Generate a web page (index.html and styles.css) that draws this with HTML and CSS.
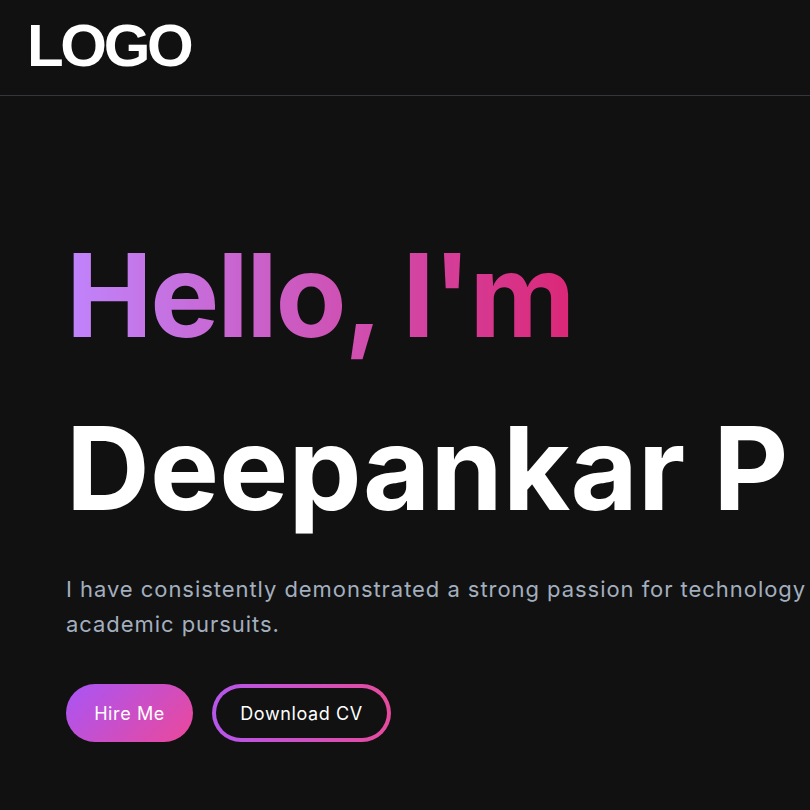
FILE: index.html
```html
<!DOCTYPE html>
<html lang="en">
<head>
<meta charset="utf-8">
<title>Deepankar P</title>
<link rel="stylesheet" href="styles.css">
</head>
<body>
<header class="site-header">
  <div class="logo">LOGO</div>
</header>
<main class="hero">
  <h1 class="hero-title">
    <span class="greeting">Hello, I'm</span>
    <span class="name">Deepankar P</span>
  </h1>
  <p class="hero-text">I have consistently demonstrated a strong passion for technology and excellence in my<br>academic pursuits.</p>
  <div class="actions">
    <a class="btn btn-primary" href="#">Hire Me</a>
    <a class="btn btn-outline" href="#"><span class="btn-inner">Download CV</span></a>
  </div>
</main>
</body>
</html>
```

FILE: styles.css
```css
html, body {
  margin: 0;
  padding: 0;
  background: #111111;
  overflow-x: hidden;
}

body {
  font-family: "Inter", "Noto Sans", sans-serif;
  color: #ffffff;
}

.site-header {
  height: 95px;
  display: flex;
  align-items: center;
  padding: 0 27px;
  border-bottom: 1px solid #38343f;
}

.logo {
  font-family: "Liberation Sans", Arial, sans-serif;
  font-weight: 700;
  font-size: 60px;
  letter-spacing: -0.055em;
  line-height: 1;
  color: #ffffff;
  margin-top: -3px;
}

.hero {
  padding: 113px 66px 60px;
}

.hero-title {
  margin: 0;
  font-weight: 700;
  font-size: 116px;
  line-height: 1.49;
  white-space: nowrap;
}

.greeting {
  display: block;
  letter-spacing: -2.3px;
  background: linear-gradient(to right, #c084fc, #db2777);
  -webkit-background-clip: text;
  background-clip: text;
  color: transparent;
  width: max-content;
}

.name {
  display: block;
  letter-spacing: 0.2px;
  color: #ffffff;
}

.hero-text {
  margin: 17px 0 0;
  font-size: 22px;
  line-height: 1.625;
  letter-spacing: 0.95px;
  color: #a3afbf;
  white-space: nowrap;
}

.actions {
  display: flex;
  gap: 19px;
  margin-top: 41px;
}

.btn {
  display: inline-flex;
  align-items: center;
  justify-content: center;
  height: 58px;
  box-sizing: border-box;
  border-radius: 999px;
  font-size: 18px;
  letter-spacing: 0.6px;
  color: #ffffff;
  text-decoration: none;
}

.btn-primary {
  width: 127px;
  background: linear-gradient(135deg, #a855f7, #ec4899);
}

.btn-outline {
  width: 179px;
  padding: 4px;
  background: linear-gradient(to right, #b556ec, #e64b9c);
}

.btn-inner {
  flex: 1;
  height: 100%;
  display: flex;
  align-items: center;
  justify-content: center;
  border-radius: 999px;
  background: #111111;
}
```
